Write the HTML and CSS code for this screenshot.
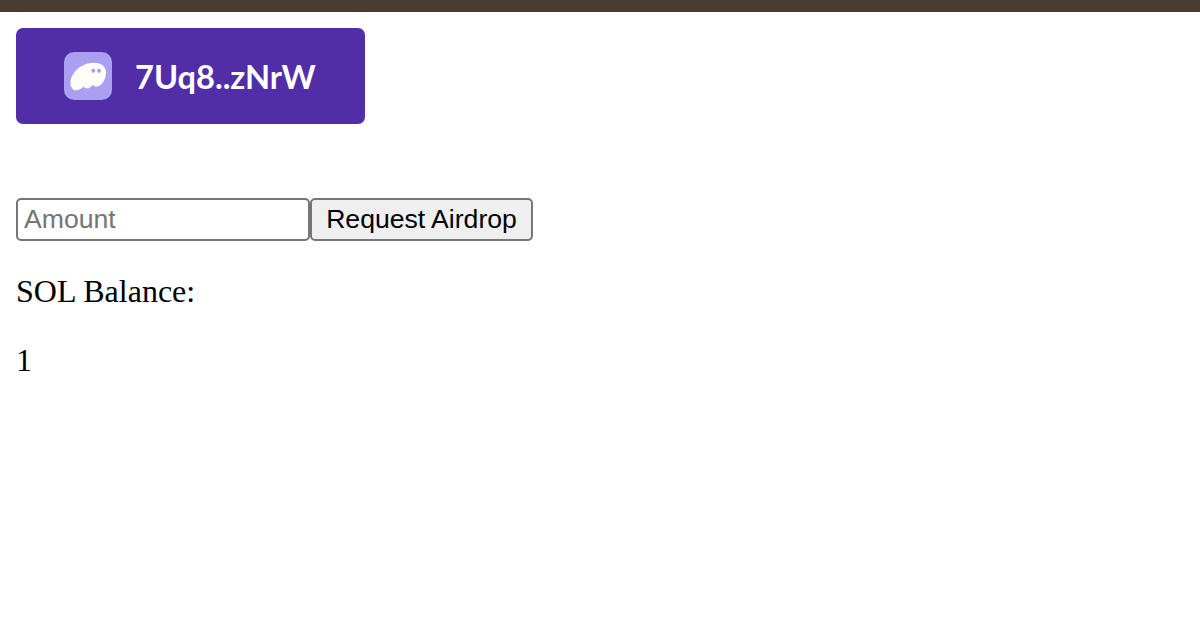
FILE: index.html
```html
<!DOCTYPE html>
<html lang="en">
<head>
  <meta charset="UTF-8">
  <title>Solana Airdrop</title>
  <link rel="stylesheet" href="styles.css">
</head>
<body>
  <div class="topbar"></div>
  <div class="container">
    <button class="wallet-btn">
      <span class="wallet-icon">
        <svg viewBox="0 0 48 48" width="48" height="48">
          <path class="ghost" d="M6.5 31C6.5 22 16 10.7 30 10.7C38 10.7 42 15 42 20.5C42 27.5 37.5 34.5 32.5 34.5C30.5 34.5 29.5 33.8 28 33C26.5 36.5 22 38 19.5 34.5C17.5 37 14.5 38.3 12 38.3C8.5 38.3 6.5 35 6.5 31Z"/>
          <circle class="eye" cx="29.3" cy="18.7" r="2"/>
          <circle class="eye" cx="35" cy="18.7" r="2"/>
        </svg>
      </span>
      <span>7Uq8..zNrW</span>
    </button>

    <div class="airdrop-row">
      <input type="text" class="amount" placeholder="Amount">
      <button class="airdrop-btn">Request Airdrop</button>
    </div>

    <p class="balance">SOL Balance:</p>
    <p class="balance">1</p>
  </div>
</body>
</html>
```

FILE: styles.css
```css
* {
  box-sizing: border-box;
}

body {
  margin: 0;
  background-color: #fff;
  color: #000;
  font-family: 'Liberation Serif', serif;
  font-size: 32px;
}

.topbar {
  height: 12px;
  background-color: #4a3b33;
}

.container {
  padding: 16px;
}

.wallet-btn {
  display: flex;
  align-items: center;
  gap: 23px;
  width: 349px;
  height: 96px;
  padding: 0 48px;
  border: none;
  border-radius: 7px;
  background-color: #512da8;
  color: #fff;
  font-family: 'Lato', sans-serif;
  font-size: 32.6px;
  font-weight: 700;
}

.wallet-icon {
  display: block;
  width: 48px;
  height: 48px;
  border-radius: 10px;
  background-color: #ab9ff2;
}

.wallet-icon svg {
  display: block;
}

.ghost {
  fill: #fffdf8;
}

.eye {
  fill: #ab9ff2;
}

.airdrop-row {
  display: flex;
  margin-top: 74px;
}

.amount {
  width: 294px;
  height: 43px;
  padding: 0 6px;
  border: 2px solid #767676;
  border-radius: 5px;
  font-family: 'Liberation Sans', sans-serif;
  font-size: 26.6px;
}

.amount::placeholder {
  color: #757575;
}

.airdrop-btn {
  width: 223px;
  height: 43px;
  padding: 0;
  border: 2px solid #767676;
  border-radius: 5px;
  background-color: #efefef;
  color: #000;
  font-family: 'Liberation Sans', sans-serif;
  font-size: 26.6px;
}

.balance {
  margin: 32px 0 0;
  line-height: 37px;
}
```
